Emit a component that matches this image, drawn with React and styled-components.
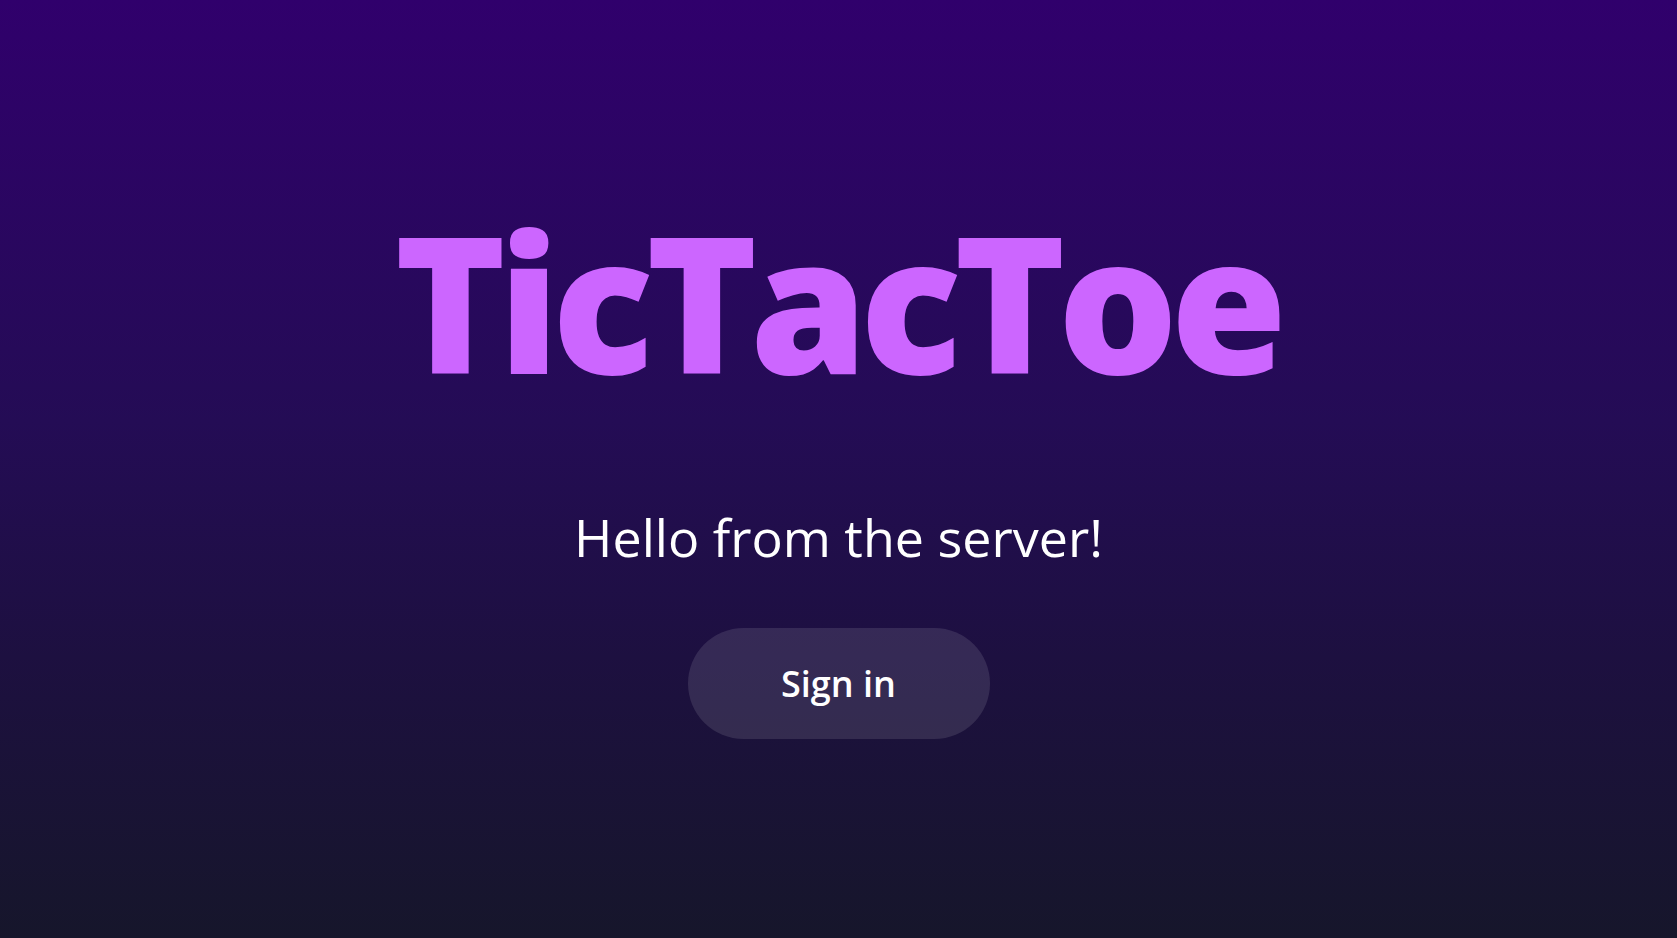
import React from "react";
import styled, { createGlobalStyle } from "styled-components";

const GlobalStyle = createGlobalStyle`
  html, body {
    margin: 0;
    padding: 0;
  }
  body {
    font-family: "Open Sans", "Noto Sans", sans-serif;
  }
`;

const Page = styled.main`
  min-height: 100vh;
  box-sizing: border-box;
  padding-top: 7px;
  background: linear-gradient(180deg, #30006c 0%, #240c55 45%, #1d1040 70%, #16162b 100%);
  display: flex;
  flex-direction: column;
  align-items: center;
  justify-content: center;
`;

const Title = styled.h1`
  margin: 0;
  padding-right: 3px;
  font-family: "Open Sans", sans-serif;
  font-weight: 800;
  font-size: 189px;
  line-height: 1;
  color: #cc66ff;
  letter-spacing: -7.8px;
`;

const Greeting = styled.p`
  margin: 116px 0 0;
  font-family: "Open Sans", sans-serif;
  font-weight: 400;
  font-size: 52px;
  line-height: 1;
  color: #ffffff;
`;

const SignInButton = styled.button`
  margin-top: 65px;
  width: 302px;
  height: 111px;
  border: none;
  border-radius: 56px;
  background: rgba(255, 255, 255, 0.11);
  color: #ffffff;
  font-family: "Open Sans", sans-serif;
  font-weight: 600;
  font-size: 36px;
  cursor: pointer;
  display: flex;
  align-items: center;
  justify-content: center;
`;

export default function App() {
  return (
    <>
      <GlobalStyle />
      <Page>
        <Title>TicTacToe</Title>
        <Greeting>Hello from the server!</Greeting>
        <SignInButton>Sign in</SignInButton>
      </Page>
    </>
  );
}
